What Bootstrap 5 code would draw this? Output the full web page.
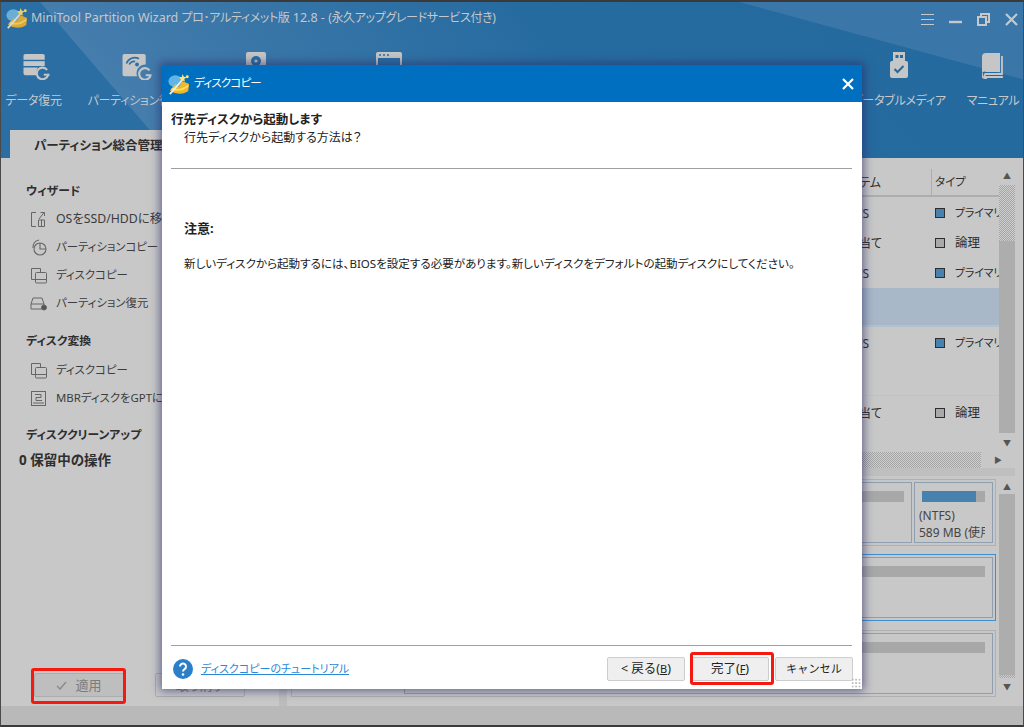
<!DOCTYPE html>
<html lang="ja">
<head>
<meta charset="utf-8">
<title>MiniTool Partition Wizard</title>
<link rel="stylesheet" href="https://cdn.jsdelivr.net/npm/bootstrap@5.3.0/dist/css/bootstrap.min.css">
<style>
html,body{height:100%;margin:0;overflow:hidden}
body{font-family:"Noto Sans","Noto Sans CJK JP",sans-serif;font-size:12px;font-feature-settings:"palt";background:#c8c8c8;color:#2e2e2e;line-height:1.25}
.app-win{width:1024px;height:727px;border-top:2px solid #3a3a3a;border-left:1px solid #4a4a4a;border-bottom:2px solid #3a3a3a;border-right:1px solid #4a4a4a}
.app-head{height:156px;flex:none;color:#c6c8ca;background:
 linear-gradient(15.25deg,transparent 82.1%,#3a76a8 82.3%),
 linear-gradient(49.4deg,#2a6ea3 0,#2a6ea3 14.9%,#457dad 15%,#266ba0 56%,#246a9f 100%)}
.title-row{height:32px;padding-left:5px}
.title-text{font-size:12.5px;margin-left:3px;white-space:nowrap}
.title-jp{font-size:12px;letter-spacing:-.33px}
.win-btn{width:24px;text-align:center}
.tool-row{height:94px;padding-top:18px}
.tool-item{text-align:center;font-size:12px;letter-spacing:-.25px;white-space:nowrap;flex:none}
.tool-item svg{display:block;margin:0 auto 13px;height:28px}
.tool-item .ic-a{margin-left:22px}
.tool-item .ic-b{margin-left:56px}
.w1{width:65px}.w2{width:138px}.w3{width:104px}.w4{width:162px}.w5{width:128px}.w6{width:60px}
.tab-row{padding-left:9px;height:30px;padding-top:2px}
.tab-on{background:#c8c8c8;color:#2e2e2e;height:28px;padding:8px 24px 0;width:170px;font-weight:700;font-size:12.5px;white-space:nowrap;overflow:hidden}
.main-area{height:548px;flex:none;background:#c8c8c8}
.side-pane{width:278px;flex:none;padding:25px 0 9px}
.side-h{font-weight:700;font-size:11.8px;padding-left:25px;height:18px}
.side-i{font-size:11.4px;height:28px;padding-left:29px;white-space:nowrap;color:#3c3c3c}
.side-i svg{margin-right:9px;flex:none}
.side-os{font-size:12.3px}
.first-i{margin-top:4px}
.first-j{margin-top:5px}
.gap-a{margin-top:16px}.gap-b{margin-top:15px}
.side-h0{padding-left:18px;margin-top:7px;font-size:13.5px}
.side-foot{padding-left:33px;margin-top:auto;gap:31px}
.dim-btn{width:90px;height:24px;background:#bebebe;border:1px solid #adadad;border-radius:2px;color:#7c7c7c;font-size:13px}
.dim-btn2{background:#c8c8c8}
.split-bar{width:8px;flex:none;background:#bcbcbc}
.right-pane{padding:8px 8px 0 4px;min-width:0}
.table-wrap{height:286px}
.tbl{min-width:0;overflow:hidden}
.t-head{height:31px;border-bottom:2px solid #adadad;flex:none;margin-bottom:1px;padding-top:3px}
.c-fs{width:640px;text-align:right;flex:none;padding-right:50px;white-space:nowrap}
.c-type{flex:none;border-left:1px solid #adadad;padding-left:3px;font-size:11.5px;white-space:nowrap}
.t-row{flex:none;font-size:12px;white-space:nowrap;overflow:hidden}
.h30{height:30px}.h32{height:32px}.h37{height:37px}.h34{height:34px}
.t-sel{background:#a8b8c8;height:39px;border-bottom:2px solid #b4c0cc}
.t-line{border-bottom:1px solid #c2c2c2}
.fs-n{padding-right:62px}
.fs-u{padding-right:49px}
.t-type{padding-left:4px;gap:10px;font-size:11px;letter-spacing:-.2px}
.t-log{font-size:12.5px;letter-spacing:0}
.sw{width:10px;height:10px;border:1px solid #2e2e2e;flex:none}
.sw-p{background:#4682ad}.sw-l{background:#a9a9a9}
.vscroll{width:16px;flex:none}
.arr{height:19px;flex:none;color:#555;font-size:8px}
.arr-t{height:15px}.arr-b{height:18px}
.arr-w{width:34px;height:16px}
.dither{background:repeating-conic-gradient(#a4a4a4 0 25%,#cfcfcf 0 50%) 0 0/2px 2px}
.dither-a{height:56px}.dither-b{height:3px}
.th-solid{background:#adadad;flex:1}
.h-bar{height:16px;flex:none}
.h-strip{height:8px;background:#bfbfbf;flex:none}
.map-area{margin-top:3px;height:217px;flex:none}
.map-col{min-width:0}
.m-row{height:67px;border:1px solid #b0b0b0;padding:2px;margin:0 3px 8px 0;flex:none;gap:2px}
.m-row2{border:1px solid #3f8fd0;margin-bottom:9px}
.m-part{border:1px solid #8f9fb0;padding:8px 7px 0}
.m-bar{height:11px;background:#a8a8a8}
.m-fill{height:100%;background:#4682ad;width:86%}
.m-txt{font-size:12px;margin-top:5px;white-space:nowrap;overflow:hidden;line-height:17px;margin-left:-3px;color:#444}
.w-end{width:79px;flex:none}
.w-lbl{width:108px;flex:none}
.dlg{position:absolute;left:162px;top:65px;width:700px;height:624px;background:#fff;box-shadow:0 0 9px 2px rgba(38,40,100,.62)}
.dlg-title{height:37px;background:#006fc0;color:#fff;padding:0 8px 0 6px;font-size:11.5px;letter-spacing:-.8px;flex:none}
.dlg-head{padding:10px 9px 0;height:66px;flex:none;color:#222}
.dlg-head b{font-size:12.5px}
.dlg-sub{padding-left:13px;font-size:12px;margin-top:2px}
.rule{height:1px;background:#a0a0a0;margin:0 10px 0 9px;flex:none}
.dlg-body{padding:51px 22px 0;color:#222;font-size:11.55px;flex:1}
.dlg-body b{font-size:13px;display:block;margin-bottom:21px}
.dlg-foot{height:43px;flex:none;padding:2px 9px 0 11px;position:relative}
.help-a{color:#2b88d8;text-decoration:underline;font-size:11px;margin-left:8px}
.btn-row{gap:6px}
.dlg-btn{width:78px;height:24px;padding:2px 0 0;background:#efefef;border:1px solid #cdcdcd;border-radius:2px;font-size:12.5px;color:#222}
.dlg-btn u{font-size:11px}
.dlg-btn-c{font-size:11.2px}
.grip{position:absolute;right:1px;bottom:1px;width:10px;height:10px;background:radial-gradient(circle,#bbb 1px,transparent 1.2px) 0 0/3.4px 3.4px}
.hl{position:absolute;border:3px solid #f5190f;border-radius:3px;pointer-events:none}
.hl-a{left:31px;top:668px;width:95px;height:36px}
.hl-b{left:690px;top:652px;width:84px;height:33px}
.status-strip{background:#b9b9b9}
</style>
</head>
<body>
<div class="app-win d-flex flex-column position-relative">
  <header class="app-head">
    <div class="title-row d-flex align-items-center">
      <svg width="22" height="22" viewBox="0 0 24 24"><ellipse cx="8" cy="9" rx="7.500" ry="6.500" fill="#6aaed6"/><path d="M2 19 L8 12 L12 15 L16 9 L23 12 L22 20 Q12 26 2 19Z" fill="#d9a93a"/><path d="M4 17 Q13 21 22 14" stroke="#eccb5c" stroke-width="2" fill="none"/><path d="M2 23 L17 6" stroke="#d8d8d8" stroke-width="2"/><path d="M16 1l1.200 3 3 .6-2.400 2 .6 3-2.400-1.600L13.600 10l.6-3-2.200-2 3-.6z" fill="#e8d468"/><circle cx="21" cy="4" r="1.600" fill="#e8d468"/></svg>
      <span class="title-text">MiniTool Partition Wizard <span class="title-jp">プロ･アルティメット版</span> 12.8 - <span class="title-jp">(永久アップグレードサービス付き)</span></span>
      <div class="ms-auto d-flex align-items-center gap-1">
        <div class="win-btn"><svg width="13" height="13" viewBox="0 0 13 13"><path d="M0 1.5h13M0 6.5h13M0 11.5h13" stroke="#c6c8ca"/></svg></div>
        <div class="win-btn"><svg width="13" height="13" viewBox="0 0 13 13"><path d="M0 9h13" stroke="#c6c8ca" stroke-width="2.4"/></svg></div>
        <div class="win-btn"><svg width="13" height="13" viewBox="0 0 13 13"><path d="M4 3V1h8v8h-3M1 4h8v8H1z" stroke="#c6c8ca" stroke-width="2" fill="none"/></svg></div>
        <div class="win-btn"><svg width="13" height="13" viewBox="0 0 13 13"><path d="M1 1l11 11M12 1L1 12" stroke="#c6c8ca" stroke-width="2.2"/></svg></div>
      </div>
    </div>
    <div class="tool-row d-flex">
      <div class="tool-item w1"><svg class="ic-a" width="28" height="29" viewBox="0 0 28 29"><path d="M2 2h18a2 2 0 0 1 2 2v4H0V4a2 2 0 0 1 2-2z" fill="#c6c6c6"/><rect x="0" y="9.500" width="22" height="5" fill="#c6c6c6"/><path d="M0 16h15a10 10 0 0 0-1.500 8H2a2 2 0 0 1-2-2z" fill="#c6c6c6"/><path d="M24.500 18.500a6 6 0 1 0 1 5.500" stroke="#c6c6c6" stroke-width="2.200" fill="none"/><path d="M21 23.500h6" stroke="#c6c6c6" stroke-width="2"/></svg>データ復元</div>
      <div class="tool-item w2"><svg class="ic-b" width="31" height="29" viewBox="0 0 31 29"><path d="M2 2h20a2 2 0 0 1 2 2v9a9 9 0 0 0-9 12H2a2 2 0 0 1-2-2V4a2 2 0 0 1 2-2z" fill="#c6c6c6"/><path d="M4 12a9 9 0 0 1 13-5M7 13a5 5 0 0 1 6-3" stroke="#2c70a6" stroke-width="1.800" fill="none"/><circle cx="15" cy="13" r="2" fill="#2c70a6"/><path d="M28 19a6 6 0 1 0 1 5.500" stroke="#c6c6c6" stroke-width="2.200" fill="none"/><path d="M24 24h6" stroke="#c6c6c6" stroke-width="2"/></svg>パーティション復元</div>
      <div class="tool-item w3"><svg width="20" height="28" viewBox="0 0 20 28"><rect width="20" height="28" rx="2" fill="#c6c6c6"/><circle cx="10" cy="9" r="5" fill="#2a6ea3"/><circle cx="10" cy="9" r="1.6" fill="#c6c6c6"/></svg>ディスクベンチマーク</div>
      <div class="tool-item w4"><svg width="26" height="28" viewBox="0 0 26 28"><rect width="26" height="28" rx="2" fill="#c6c6c6"/><rect x="2" y="6" width="22" height="20" fill="#2a6ea3"/><path d="M3 3h2M7 3h2M11 3h2" stroke="#2a6ea3" stroke-width="1.6"/></svg>スペースアナライザー</div>
      <div class="flex-grow-1"></div>
      <div class="tool-item w5"><svg width="20" height="28" viewBox="0 0 20 28"><path d="M4 0h12v10H4z" fill="#c6c6c6"/><rect x="6.500" y="3" width="3" height="3" fill="#2569a0"/><rect x="11" y="3" width="3" height="3" fill="#2569a0"/><rect x="1" y="9" width="18" height="17" rx="2" fill="#c6c6c6"/><path d="M5.500 17l3 3 6-6" stroke="#2569a0" stroke-width="2" fill="none"/></svg>ブータブルメディア</div>
      <div class="tool-item w6"><svg width="22" height="28" viewBox="0 0 22 28"><path d="M4 1h14v19H4a3 3 0 0 0-4 1V5a4 4 0 0 1 4-4z" fill="#c6c6c6"/><path d="M20 4v18H4a1.500 1.500 0 0 0 0 3h16v-1" stroke="#c6c6c6" stroke-width="1.800" fill="none"/><path d="M0 21v2a3 3 0 0 0 3 3h2" stroke="#c6c6c6" stroke-width="1.800" fill="none"/></svg>マニュアル</div>
    </div>
    <div class="tab-row d-flex"><div class="tab-on">パーティション総合管理</div></div>
  </header>

  <div class="main-area d-flex">
    <aside class="side-pane d-flex flex-column">
      <div class="side-h">ウィザード</div>
      <div class="side-i side-os first-i d-flex align-items-center"><svg width="17" height="17" viewBox="0 0 17 17" fill="none" stroke="#666"><path d="M6 1.500H1.500v14H6M9 8l5-6.500M10.500 1.500H14.500V5M8.500 9h6v6.500h-6zM11.500 9v6.500"/></svg>OSをSSD/HDDに移行</div>
      <div class="side-i d-flex align-items-center"><svg width="17" height="17" viewBox="0 0 17 17" fill="none" stroke="#666" stroke-width="1.100"><circle cx="10" cy="10" r="6"/><path d="M10 4v6h6M3 9a7 7 0 0 1 6-8"/></svg>パーティションコピー</div>
      <div class="side-i d-flex align-items-center"><svg width="17" height="17" viewBox="0 0 17 17" fill="none" stroke="#666"><path d="M5 12.500H1.500v-11h9V5"/><rect x="5.500" y="5.500" width="11" height="10.500" rx="1"/><path d="M5.500 12.500h11"/></svg>ディスクコピー</div>
      <div class="side-i d-flex align-items-center"><svg width="17" height="17" viewBox="0 0 17 17" fill="none" stroke="#666"><path d="M1 9l2-6h9l2 6v5H1zM1 9h13"/><circle cx="14" cy="12.500" r="2.500" fill="#555"/></svg>パーティション復元</div>
      <div class="side-h gap-a">ディスク変換</div>
      <div class="side-i first-j d-flex align-items-center"><svg width="17" height="17" viewBox="0 0 17 17" fill="none" stroke="#666"><path d="M5 12.500H1.500v-11h9V5"/><rect x="5.500" y="5.500" width="11" height="10.500" rx="1"/><path d="M5.500 12.500h11"/></svg>ディスクコピー</div>
      <div class="side-i d-flex align-items-center"><svg width="17" height="17" viewBox="0 0 17 17" fill="none" stroke="#666"><rect x="1.500" y="1.500" width="14" height="14"/><path d="M5 4.500h6v3H6v3h6M3 13h11"/></svg>MBRディスクをGPTに変換</div>
      <div class="side-h gap-b">ディスククリーンアップ</div>
      <div class="side-h side-h0">0 保留中の操作</div>
      <div class="side-foot d-flex">
        <div class="dim-btn d-flex align-items-center justify-content-center gap-2"><svg width="11" height="9" viewBox="0 0 11 9" fill="none" stroke="#8c8c8c" stroke-width="1.500"><path d="M1 5l3 3 6-7"/></svg>適用</div>
        <div class="dim-btn dim-btn2 d-flex align-items-center justify-content-center">取り消す</div>
      </div>
    </aside>
    <div class="split-bar"></div>
    <section class="right-pane flex-grow-1 d-flex flex-column">
      <div class="table-wrap d-flex flex-shrink-0">
        <div class="tbl flex-grow-1 d-flex flex-column">
          <div class="t-head d-flex align-items-center">
            <div class="c-fs">ファイルシステム</div><div class="c-type flex-grow-1 h-100 d-flex align-items-center">タイプ</div>
          </div>
          <div class="t-row h30 d-flex align-items-center"><div class="c-fs fs-n">NTFS</div><div class="t-type d-flex align-items-center"><i class="sw sw-p"></i>プライマリ</div></div>
          <div class="t-row h30 d-flex align-items-center"><div class="c-fs fs-u">未割り当て</div><div class="t-type t-log d-flex align-items-center"><i class="sw sw-l"></i>論理</div></div>
          <div class="t-row h30 d-flex align-items-center"><div class="c-fs fs-n">NTFS</div><div class="t-type d-flex align-items-center"><i class="sw sw-p"></i>プライマリ</div></div>
          <div class="t-row t-sel"></div>
          <div class="t-row h32 d-flex align-items-center"><div class="c-fs fs-n">NTFS</div><div class="t-type d-flex align-items-center"><i class="sw sw-p"></i>プライマリ</div></div>
          <div class="t-row h37 t-line"></div>
          <div class="t-row h34 d-flex align-items-center"><div class="c-fs fs-u">未割り当て</div><div class="t-type t-log d-flex align-items-center"><i class="sw sw-l"></i>論理</div></div>
        </div>
        <div class="vscroll d-flex flex-column">
          <div class="arr d-flex align-items-center justify-content-center">▲</div>
          <div class="dither dither-a"></div>
          <div class="th-solid"></div>
          <div class="arr d-flex align-items-center justify-content-center">▼</div>
        </div>
      </div>
      <div class="h-bar d-flex"><div class="dither flex-grow-1"></div><div class="arr arr-w d-flex align-items-center justify-content-center">▶</div></div>
      <div class="h-strip"></div>
      <div class="map-area d-flex">
        <div class="map-col flex-grow-1 d-flex flex-column">
          <div class="m-row d-flex"><div class="w-lbl"></div><div class="m-part flex-grow-1"><div class="m-bar"></div></div><div class="m-part w-end"><div class="m-bar"><div class="m-fill"></div></div><div class="m-txt">(NTFS)<br>589 MB (使用済み</div></div></div>
          <div class="m-row m-row2 d-flex"><div class="w-lbl"></div><div class="m-part flex-grow-1"><div class="m-bar"></div></div></div>
          <div class="m-row d-flex"><div class="w-lbl"></div><div class="m-part flex-grow-1"><div class="m-bar"></div></div></div>
        </div>
        <div class="vscroll d-flex flex-column">
          <div class="arr arr-t d-flex align-items-center justify-content-center">▲</div>
          <div class="th-solid"></div>
          <div class="dither dither-b"></div>
          <div class="arr arr-b d-flex align-items-center justify-content-center">▼</div>
        </div>
      </div>
    </section>
  </div>
  <div class="flex-grow-1 status-strip"></div>
</div>

<div class="dlg d-flex flex-column">
  <div class="dlg-title d-flex align-items-center">
    <svg width="22" height="22" viewBox="0 0 24 24"><ellipse cx="8" cy="9" rx="7.500" ry="6.500" fill="#5fb4e8"/><path d="M2 19 L8 12 L12 15 L16 9 L23 12 L22 20 Q12 26 2 19Z" fill="#f0b92c"/><path d="M4 17 Q13 21 22 14" stroke="#ffdf5e" stroke-width="2" fill="none"/><path d="M2 23 L17 6" stroke="#eee" stroke-width="2"/><path d="M16 1l1.200 3 3 .6-2.400 2 .6 3-2.400-1.600L13.600 10l.6-3-2.200-2 3-.6z" fill="#ffe97a"/><circle cx="21" cy="4" r="1.600" fill="#ffe97a"/></svg>
    <span class="ms-1">ディスクコピー</span>
    <svg class="ms-auto" width="12" height="12" viewBox="0 0 12 12"><path d="M1 1l10 10M11 1L1 11" stroke="#fff" stroke-width="2.200"/></svg>
  </div>
  <div class="dlg-head">
    <b>行先ディスクから起動します</b>
    <div class="dlg-sub">行先ディスクから起動する方法は？</div>
  </div>
  <div class="rule"></div>
  <div class="dlg-body">
    <b>注意:</b>
    <div>新しいディスクから起動するには、BIOSを設定する必要があります。新しいディスクをデフォルトの起動ディスクにしてください。</div>
  </div>
  <div class="rule"></div>
  <div class="dlg-foot d-flex align-items-center">
    <svg width="20" height="20" viewBox="0 0 20 20"><circle cx="10" cy="10" r="10" fill="#2b7fc9"/><path d="M7 7.500a3 3 0 1 1 4.500 2.600c-1 .6-1.500 1-1.500 2.400" stroke="#fff" stroke-width="2" fill="none"/><circle cx="10" cy="15.500" r="1.300" fill="#fff"/></svg>
    <a class="help-a" href="#">ディスクコピーのチュートリアル</a>
    <div class="ms-auto d-flex btn-row">
      <button class="btn dlg-btn">&lt; 戻る(<u>B</u>)</button>
      <button class="btn dlg-btn">完了(<u>F</u>)</button>
      <button class="btn dlg-btn dlg-btn-c">キャンセル</button>
    </div>
    <div class="grip"></div>
  </div>
</div>
<div class="hl hl-a"></div>
<div class="hl hl-b"></div>
<script src="https://cdn.jsdelivr.net/npm/bootstrap@5.3.0/dist/js/bootstrap.bundle.min.js"></script>
</body>
</html>
